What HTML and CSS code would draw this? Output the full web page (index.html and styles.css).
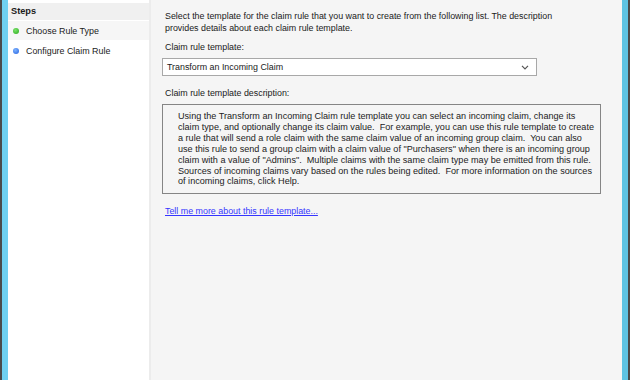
FILE: index.html
```html
<!DOCTYPE html>
<html lang="en">
<head>
  <meta charset="UTF-8">
  <title>Add Transform Claim Rule Wizard</title>
  <link rel="stylesheet" href="styles.css">
</head>
<body>
  <div class="window">
    <div class="steps">
      <div class="steps-title">Steps</div>
      <div class="step current"><span class="dot green"></span>Choose Rule Type</div>
      <div class="step"><span class="dot blue"></span>Configure Claim Rule</div>
    </div>
    <div class="content">
      <p class="intro">Select the template for the claim rule that you want to create from the following list. The description provides details about each claim rule template.</p>
      <label class="label">Claim rule template:</label>
      <div class="select">
        <span>Transform an Incoming Claim</span>
        <svg width="8" height="5" viewBox="0 0 8 5"><path d="M1 0.8 L4 3.8 L7 0.8" fill="none" stroke="#555" stroke-width="1.2"/></svg>
      </div>
      <label class="label">Claim rule template description:</label>
      <div class="desc">
        Using the Transform an Incoming Claim rule template you can select an incoming claim, change its<br>
        claim type, and optionally change its claim value.&nbsp; For example, you can use this rule template to create<br>
        a rule that will send a role claim with the same claim value of an incoming group claim.&nbsp; You can also<br>
        use this rule to send a group claim with a claim value of "Purchasers" when there is an incoming group<br>
        claim with a value of "Admins".&nbsp; Multiple claims with the same claim type may be emitted from this rule.<br>
        Sources of incoming claims vary based on the rules being edited.&nbsp; For more information on the sources<br>
        of incoming claims, click Help.
      </div>
      <a class="more" href="#">Tell me more about this rule template...</a>
    </div>
  </div>
</body>
</html>
```

FILE: styles.css
```css
html, body {
  margin: 0;
  height: 100%;
}
body {
  font-family: "Liberation Sans", Arial, sans-serif;
  font-size: 8.9px;
  color: #1a1a1a;
  background: #4a4a4a;
  padding: 0 2px;
  box-sizing: border-box;
}
.window {
  display: flex;
  height: 100%;
  border-left: 6px solid #6fd0f0;
  border-right: 6px solid #5ec3e3;
}
.steps {
  width: 141px;
  background: #fff;
  border-right: 2px solid #ececec;
  padding-top: 3px;
}
.steps-title {
  background: #f0f0f0;
  font-weight: bold;
  font-size: 9.2px;
  height: 17px;
  line-height: 16px;
  padding-left: 3px;
}
.step {
  display: flex;
  align-items: center;
  height: 19px;
  margin-top: 1px;
  padding-left: 5px;
}
.step.current {
  background: #f6f6f6;
}
.dot {
  width: 6px;
  height: 6px;
  border-radius: 50%;
  margin-right: 7px;
}
.dot.green {
  background: radial-gradient(circle at 40% 35%, #7be36b, #27a81a);
}
.dot.blue {
  background: radial-gradient(circle at 40% 35%, #7fb4ff, #2160e0);
}
.content {
  flex: 1;
  background: #f5f5f5;
  padding: 10px 0 0 12px;
}
.intro {
  margin: 0 0 7px 2px;
  line-height: 12px;
  width: 402px;
}
.label {
  display: block;
  margin-left: 2px;
  line-height: 12px;
}
.select {
  display: flex;
  justify-content: space-between;
  align-items: center;
  width: 362px;
  height: 16px;
  margin: 5px 0 11px -1px;
  padding: 0 7px 0 4px;
  background: #fff;
  border: 1px solid #a8a8a8;
  box-sizing: content-box;
}
.desc {
  width: 422px;
  height: 78px;
  margin: 5px 0 12px -1px;
  padding: 6px 0 4px 15px;
  border: 1px solid #858585;
  line-height: 10.9px;
  font-size: 9.1px;
  color: #222;
}
.more {
  margin-left: 2px;
  color: #3535ff;
  text-decoration: underline;
}
```
